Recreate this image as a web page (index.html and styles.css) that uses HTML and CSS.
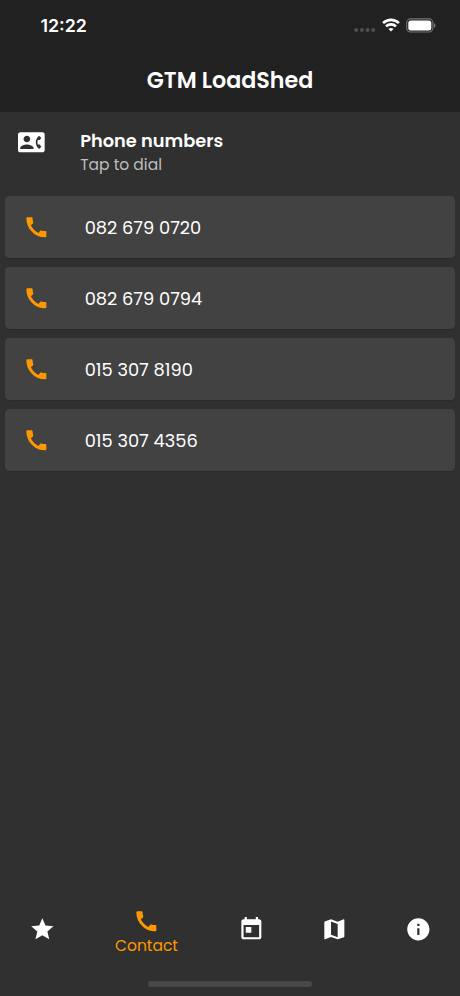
FILE: index.html
```html
<!DOCTYPE html>
<html lang="en">
<head>
  <meta charset="UTF-8" />
  <meta name="viewport" content="width=device-width, initial-scale=1.0"/>
  <title>GTM LoadShed</title>
  <link rel="stylesheet" href="styles.css">
</head>
<body>

<svg class="sprite">
  <symbol id="phone" viewBox="0 0 24 24">
    <path d="M20.01 15.38c-1.23 0-2.42-.2-3.53-.56-.35-.12-.74-.03-1.01.24l-1.57 1.97c-2.83-1.35-5.48-3.9-6.89-6.83l1.95-1.66c.27-.28.35-.67.24-1.02-.37-1.11-.56-2.3-.56-3.53 0-.54-.45-.99-.99-.99H4.19C3.65 3 3 3.24 3 3.99 3 13.28 10.73 21 20.01 21c.71 0 .99-.63.99-1.18v-3.45c0-.54-.45-.99-.99-.99z"/>
  </symbol>
</svg>

<div class="app">
  <header>
    <div class="status-bar">
      <span class="time">12:22</span>
      <div class="status-icons">
        <svg class="signal" viewBox="0 0 22 4">
          <circle cx="2.2" cy="2" r="2"/><circle cx="7.9" cy="2" r="2"/><circle cx="13.5" cy="2" r="2"/><circle cx="19.2" cy="2" r="2"/>
        </svg>
        <svg class="wifi" viewBox="0 0 18 14">
          <path d="M1.1 5.1a11.2 11.2 0 0 1 15.8 0M4 8.4a7.1 7.1 0 0 1 10 0"/>
          <path class="dot" d="M9 13.6 6.5 11.1a3.6 3.6 0 0 1 5 0z"/>
        </svg>
        <svg class="battery" viewBox="0 0 30 15">
          <rect class="shell" x=".7" y=".9" width="26.2" height="13.1" rx="4"/>
          <rect class="charge" x="2.3" y="2.5" width="23" height="9.9" rx="2.5"/>
          <path class="tip" d="M28 5.2c1.9.7 1.9 3.8 0 4.5z"/>
        </svg>
      </div>
    </div>
    <h1>GTM LoadShed</h1>
  </header>

  <main>
    <div class="intro">
      <svg class="icon" viewBox="0 0 24 24">
        <path d="M22 3H2C.9 3 0 3.9 0 5v14c0 1.1.9 2 2 2h20c1.1 0 1.99-.9 1.99-2L24 5c0-1.1-.9-2-2-2zM8 6c1.66 0 3 1.34 3 3s-1.34 3-3 3-3-1.34-3-3 1.34-3 3-3zm6 12H2v-1c0-2 4-3.1 6-3.1s6 1.1 6 3.1v1zm3.85-4h1.64L21 16l-1.99 1.99c-1.31-.98-2.28-2.38-2.73-3.99-.18-.64-.28-1.31-.28-2s.1-1.36.28-2c.45-1.62 1.42-3.01 2.73-3.99L21 8l-1.51 2h-1.64c-.22.63-.35 1.3-.35 2s.13 1.37.35 2z"/>
      </svg>
      <div>
        <h2>Phone numbers</h2>
        <p>Tap to dial</p>
      </div>
    </div>

    <div class="numbers">
      <a class="card" href="tel:0826790720"><svg class="icon"><use href="#phone"/></svg><span>082 679 0720</span></a>
      <a class="card" href="tel:0826790794"><svg class="icon"><use href="#phone"/></svg><span>082 679 0794</span></a>
      <a class="card" href="tel:0153078190"><svg class="icon"><use href="#phone"/></svg><span>015 307 8190</span></a>
      <a class="card" href="tel:0153074356"><svg class="icon"><use href="#phone"/></svg><span>015 307 4356</span></a>
    </div>
  </main>

  <nav>
    <a class="tab" href="#">
      <svg class="icon" viewBox="0 0 24 24"><path d="M12 17.27L18.18 21l-1.64-7.03L22 9.24l-7.19-.61L12 2 9.19 8.63 2 9.24l5.46 4.73L5.82 21z"/></svg>
    </a>
    <a class="tab active" href="#">
      <svg class="icon"><use href="#phone"/></svg>
      <span>Contact</span>
    </a>
    <a class="tab" href="#">
      <svg class="icon" viewBox="0 0 24 24"><path d="M19 3h-1V1h-2v2H8V1H6v2H5c-1.11 0-1.99.9-1.99 2L3 19c0 1.1.89 2 2 2h14c1.1 0 2-.9 2-2V5c0-1.1-.9-2-2-2zm0 16H5V8h14v11zM7 10h5v5H7z"/></svg>
    </a>
    <a class="tab" href="#">
      <svg class="icon" viewBox="0 0 24 24"><path d="M20.5 3l-.16.03L15 5.1 9 3 3.36 4.9c-.21.07-.36.25-.36.48V20.5c0 .28.22.5.5.5l.16-.03L9 18.9l6 2.1 5.64-1.9c.21-.07.36-.25.36-.48V3.5c0-.28-.22-.5-.5-.5zM15 19l-6-2.11V5l6 2.11V19z"/></svg>
    </a>
    <a class="tab" href="#">
      <svg class="icon" viewBox="0 0 24 24"><path d="M12 2C6.48 2 2 6.48 2 12s4.48 10 10 10 10-4.48 10-10S17.52 2 12 2zm1 15h-2v-6h2v6zm0-8h-2V7h2v2z"/></svg>
    </a>
  </nav>
  <div class="home-bar"></div>
</div>

</body>
</html>
```
FILE: styles.css
```css
* {
  box-sizing: border-box;
}

body {
  margin: 0;
  font-family: Poppins, Inter, sans-serif;
  background-color: #303030;
  color: #fff;
}

h1, h2, p {
  margin: 0;
}

a {
  color: inherit;
  text-decoration: none;
}

.sprite {
  display: none;
}

.icon {
  display: block;
  flex: none;
  width: 26.7px;
  height: 26.7px;
  fill: currentColor;
}

.app {
  display: flex;
  flex-direction: column;
  height: 996px;
}

header {
  height: 112px;
  background-color: #212121;
}

.status-bar {
  display: flex;
  justify-content: space-between;
  height: 50px;
  padding: 14px 24px 0 40.5px;
}

.time {
  font-family: Inter, sans-serif;
  font-size: 17.8px;
  font-weight: 600;
  line-height: 24px;
}

.status-icons {
  display: flex;
  align-items: center;
  height: 22px;
}

.signal {
  width: 22px;
  height: 4px;
  margin: 9px 6px 0 0;
  fill: #505050;
}

.wifi {
  width: 18px;
  height: 14px;
  margin-right: 6px;
  fill: none;
  stroke: #fff;
  stroke-width: 2.6;
}

.wifi .dot {
  fill: #fff;
  stroke: none;
}

.battery {
  width: 30px;
  height: 15px;
}

.shell {
  fill: none;
  stroke: #777;
  stroke-width: 1.1;
}

.charge {
  fill: #fff;
}

.tip {
  fill: #777;
}

h1 {
  font-size: 22.2px;
  font-weight: 600;
  line-height: 61px;
  text-align: center;
}

main {
  flex: 1;
}

.intro {
  display: flex;
  gap: 35.5px;
  height: 84px;
  padding: 17px 18px 0;
}

h2 {
  font-size: 17.8px;
  font-weight: 600;
  line-height: 24px;
}

.intro p {
  font-size: 15.5px;
  line-height: 24px;
  color: #bdbdbd;
}

.numbers {
  display: flex;
  flex-direction: column;
  gap: 9px;
  padding: 0 5px;
}

.card {
  display: flex;
  align-items: center;
  gap: 35.5px;
  height: 62px;
  padding: 0 17.5px;
  border-radius: 4.5px;
  background-color: #424242;
  box-shadow: 0 1px 1px rgba(0, 0, 0, 0.12);
  font-size: 17.8px;
}

.card .icon, .active {
  color: #ff9800;
}

nav {
  display: flex;
  height: 62px;
  margin-bottom: 18px;
  padding-left: 0.2px;
}

.tab {
  display: flex;
  flex: 83.6;
  flex-direction: column;
  align-items: center;
  padding-top: 14.5px;
}

.tab.active {
  flex: 125.4;
  padding-top: 7px;
}

.tab span {
  font-size: 15.5px;
  line-height: 22px;
}

.home-bar {
  width: 164px;
  height: 6px;
  margin: 0 auto 9px;
  border-radius: 3px;
  background-color: #484848;
}
```
